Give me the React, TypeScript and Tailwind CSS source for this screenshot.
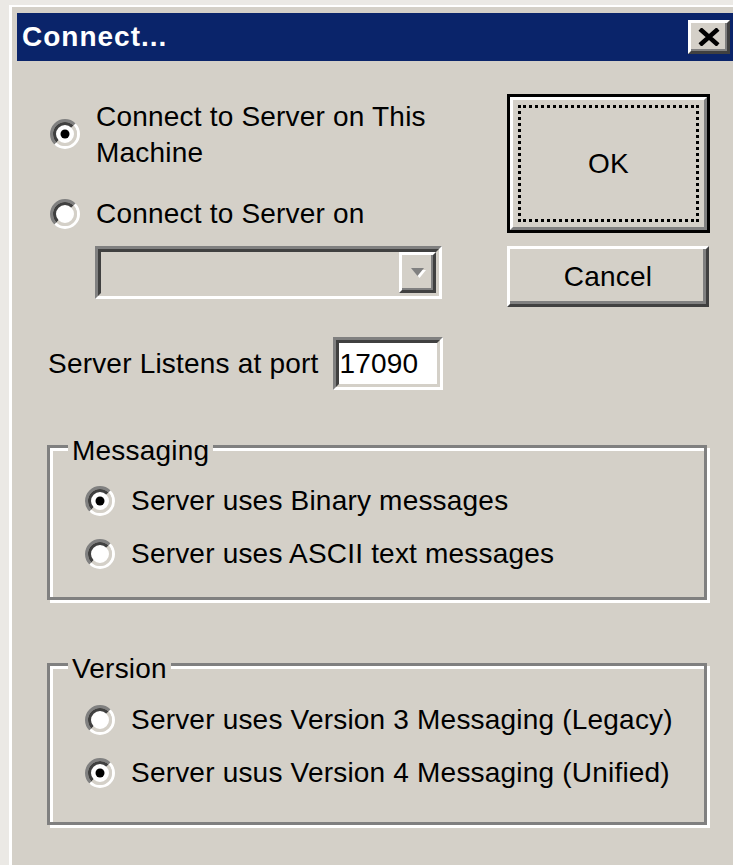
import type { ReactNode } from "react";

// classic dialog text at the scaled-up dialog size
const uiText =
  "font-['Liberation_Sans',Arial,sans-serif] text-[28px] leading-[36px] text-black tracking-[0.2px]";

// half-circle arcs split along the bottom-left / top-right diagonal
function ring(r: number) {
  const c = 15;
  const d = r / Math.SQRT2;
  const bl = `${c - d} ${c + d}`;
  const tr = `${c + d} ${c - d}`;
  return {
    topLeft: `M ${bl} A ${r} ${r} 0 0 1 ${tr}`,
    bottomRight: `M ${tr} A ${r} ${r} 0 0 1 ${bl}`,
  };
}

const outerRing = ring(13.5);
const innerRing = ring(10.5);

function RadioMark({ checked }: { checked?: boolean }) {
  return (
    <svg width="30" height="30" viewBox="0 0 30 30" className="shrink-0 block">
      <circle cx="15" cy="15" r="10" fill="#fff" />
      <path d={outerRing.topLeft} stroke="#808080" strokeWidth="3" fill="none" />
      <path d={outerRing.bottomRight} stroke="#fff" strokeWidth="3" fill="none" />
      <path d={innerRing.topLeft} stroke="#404040" strokeWidth="3" fill="none" />
      <path d={innerRing.bottomRight} stroke="#d4d0c8" strokeWidth="3" fill="none" />
      {checked && <circle cx="15" cy="15" r="4.5" fill="#000" />}
    </svg>
  );
}

function Radio({ label, checked }: { label: string; checked?: boolean }) {
  return (
    <div className="flex items-center gap-[16px]">
      <RadioMark checked={checked} />
      <span className="whitespace-nowrap">{label}</span>
    </div>
  );
}

function GroupBox({
  title,
  className,
  children,
}: {
  title: string;
  className: string;
  children: ReactNode;
}) {
  return (
    <div
      className={`relative w-[660px] border-[3px] border-[#808080] shadow-[3px_3px_0_#fff,inset_3px_3px_0_#fff] pl-[35px] ${className}`}
    >
      <span className="absolute left-[18px] top-[-15px] bg-[#d4d0c8] px-[4px]">{title}</span>
      <div className="flex flex-col gap-[17px]">{children}</div>
    </div>
  );
}

function CloseButton() {
  return (
    <button className="flex h-[34px] w-[42px] items-center justify-center border-[3px] border-t-white border-l-white border-r-[#404040] border-b-[#404040] bg-[#d4d0c8] shadow-[inset_-2px_-2px_0_#808080]">
      <svg width="22" height="18" viewBox="0 0 22 18">
        <path d="M2 1 L20 17 M20 1 L2 17" stroke="#000" strokeWidth="4.5" />
      </svg>
    </button>
  );
}

function ComboBox() {
  return (
    <div className="ml-[45px] mt-[14px] h-[53px] w-[347px] border-[3px] border-t-[#808080] border-l-[#808080] border-r-white border-b-white">
      <div className="flex h-full justify-end border-[3px] border-t-[#404040] border-l-[#404040] border-r-[#d4d0c8] border-b-[#d4d0c8]">
        <div className="flex h-full w-[37px] items-center justify-center border-[3px] border-t-white border-l-white border-r-[#404040] border-b-[#404040] shadow-[inset_-2px_-2px_0_#808080]">
          <svg width="16" height="11" viewBox="0 0 16 11">
            <path d="M3 3 H16 L9.5 11 Z" fill="#fff" />
            <path d="M1 1 H14 L7.5 9 Z" fill="#808080" />
          </svg>
        </div>
      </div>
    </div>
  );
}

export default function App() {
  return (
    <div className="h-[865px] w-[733px] overflow-hidden bg-[#ebe9e5] pl-[9px] pt-[5px]">
      <div className={`h-[860px] border-l-[3px] border-t-[2px] border-white bg-[#d4d0c8] pl-[5px] pt-[6px] ${uiText}`}>
        {/* caption */}
        <div className="flex h-[48px] w-[716px] items-center justify-between bg-[#0a246a] pl-[5px] pr-[3px]">
          <span className="font-['Liberation_Sans',Arial,sans-serif] text-[28px] font-bold tracking-[1px] text-white">
            Connect...
          </span>
          <CloseButton />
        </div>

        <div className="pl-[30px]">
          {/* server choice + buttons */}
          <div className="flex w-[663px] justify-between pt-[33px]">
            <div className="pl-[3px] pt-[5px]">
              <div className="flex items-start gap-[16px]">
                <span className="mt-[20px]">
                  <RadioMark checked />
                </span>
                <span>
                  Connect to Server on This
                  <br />
                  Machine
                </span>
              </div>
              <div className="mt-[25px] flex items-center gap-[16px]">
                <RadioMark />
                <span>Connect to Server on</span>
              </div>
              <ComboBox />
            </div>

            <div className="flex w-[203px] flex-col">
              <button className="h-[139px] w-[203px] border-[3px] border-black bg-[#d4d0c8]">
                <div className="h-full w-full border-[3px] border-t-white border-l-white border-r-[#808080] border-b-[#808080] p-[5px]">
                  <div className="flex h-full w-full items-center justify-center border-[3px] border-dotted border-black">
                    OK
                  </div>
                </div>
              </button>
              <button className="mt-[13px] h-[61px] w-[202px] border-[3px] border-t-white border-l-white border-r-[#404040] border-b-[#404040] bg-[#d4d0c8] shadow-[inset_-3px_-3px_0_#808080]">
                Cancel
              </button>
            </div>
          </div>

          {/* port */}
          <div className="mt-[30px] flex items-center gap-[14px] pl-[1px]">
            <span>Server Listens at port</span>
            <div className="h-[53px] w-[110px] border-[3px] border-t-[#808080] border-l-[#808080] border-r-white border-b-white">
              <div className="flex h-full items-center border-[3px] border-t-[#404040] border-l-[#404040] border-r-[#d4d0c8] border-b-[#d4d0c8] bg-white pl-[1px]">
                17090
              </div>
            </div>
          </div>

          <GroupBox title="Messaging" className="mt-[55px] h-[155px] pt-[35px]">
            <Radio label="Server uses Binary messages" checked />
            <Radio label="Server uses ASCII text messages" />
          </GroupBox>

          <GroupBox title="Version" className="mt-[63px] h-[162px] pt-[36px]">
            <Radio label="Server uses Version 3 Messaging (Legacy)" />
            <Radio label="Server usus Version 4 Messaging (Unified)" checked />
          </GroupBox>
        </div>
      </div>
    </div>
  );
}
